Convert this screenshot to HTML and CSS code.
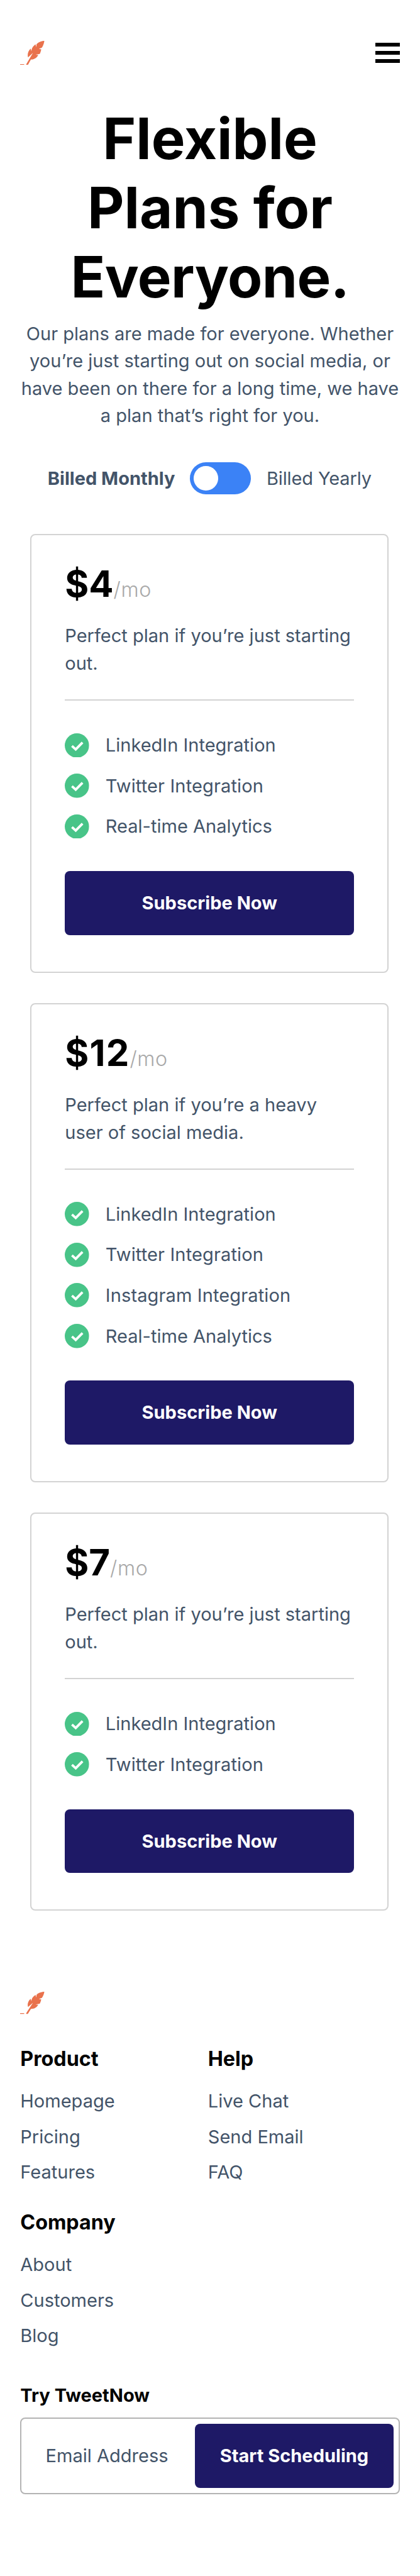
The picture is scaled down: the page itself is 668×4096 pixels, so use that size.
FILE: index.html
```html
<!DOCTYPE html>
<html lang="en">
<head>
<meta charset="utf-8">
<title>TweetNow Pricing</title>
<link rel="stylesheet" href="styles.css">
</head>
<body>
<svg class="sprite" aria-hidden="true">
  <symbol id="feather" viewBox="0 0 72 72" preserveAspectRatio="none">
    <path d="M0 69H12V72H0Z"/>
    <path d="M72 0C62 0 52 5 48.500 10L48 18.500 45.500 10C39 15 33.500 21 33.500 31L31 23C23 31 21 41 23.500 49L38 35.500 17.500 70 19 72H22.500L32 55C41 56 50 50 53.500 42L45.500 41 58 38.500C60.500 34 61.500 29 62.500 25L55.500 23.500 64.500 20C69 13 70.500 6 72 0Z"/>
  </symbol>
  <symbol id="check" viewBox="0 0 24 24">
    <circle cx="12" cy="12" r="12" fill="#48c488"/>
    <path d="M7.100 12.500 10.800 15.900 17.500 9" fill="none" stroke="#fff" stroke-width="2.400"/>
  </symbol>
</svg>

<header class="topbar">
  <svg class="logo"><use href="#feather"/></svg>
  <button class="burger" aria-label="Menu"><span></span><span></span><span></span></button>
</header>

<main>
  <section class="hero">
    <h1>Flexible<br>Plans for<br><span class="tight">Everyone.</span></h1>
    <p>Our plans are made for everyone. Whether<br>you’re just starting out on social media, or<br>have been on there for a long time, we have<br>a plan that’s right for you.</p>
    <div class="billing">
      <span class="active">Billed Monthly</span>
      <span class="toggle"></span>
      <span class="yearly">Billed Yearly</span>
    </div>
  </section>

  <section class="plans">
    <article class="plan">
      <div class="price"><strong>$4</strong><span>/mo</span></div>
      <p>Perfect plan if you’re just starting<br>out.</p>
      <hr>
      <ul>
        <li><svg><use href="#check"/></svg>LinkedIn Integration</li>
        <li class="loose"><svg><use href="#check"/></svg>Twitter Integration</li>
        <li><svg><use href="#check"/></svg>Real-time Analytics</li>
      </ul>
      <button class="btn">Subscribe Now</button>
    </article>
    <article class="plan">
      <div class="price"><strong class="wide">$12</strong><span>/mo</span></div>
      <p>Perfect plan if you’re a heavy<br>user of social media.</p>
      <hr>
      <ul>
        <li><svg><use href="#check"/></svg>LinkedIn Integration</li>
        <li class="loose"><svg><use href="#check"/></svg>Twitter Integration</li>
        <li class="loose"><svg><use href="#check"/></svg>Instagram Integration</li>
        <li><svg><use href="#check"/></svg>Real-time Analytics</li>
      </ul>
      <button class="btn">Subscribe Now</button>
    </article>
    <article class="plan">
      <div class="price"><strong>$7</strong><span>/mo</span></div>
      <p>Perfect plan if you’re just starting<br>out.</p>
      <hr>
      <ul>
        <li><svg><use href="#check"/></svg>LinkedIn Integration</li>
        <li class="loose"><svg><use href="#check"/></svg>Twitter Integration</li>
      </ul>
      <button class="btn">Subscribe Now</button>
    </article>
  </section>
</main>

<footer class="footer">
  <svg class="logo"><use href="#feather"/></svg>
  <div class="links">
    <nav>
      <h2>Product</h2>
      <a>Homepage</a><a>Pricing</a><a>Features</a>
    </nav>
    <nav>
      <h2>Help</h2>
      <a>Live Chat</a><a>Send Email</a><a>FAQ</a>
    </nav>
    <nav>
      <h2>Company</h2>
      <a>About</a><a>Customers</a><a>Blog</a>
    </nav>
  </div>
  <h3>Try TweetNow</h3>
  <form class="signup">
    <span class="field">Email Address</span>
    <button type="button" class="btn">Start Scheduling</button>
  </form>
</footer>
</body>
</html>
```
FILE: styles.css
```css
:root {
  --x: 1.61353px;
  --y: 1.6145px;
}

* {
  box-sizing: border-box;
  margin: 0;
  padding: 0;
}

body {
  background: #fff;
  color: #435469;
  font-family: Inter, "Liberation Sans", sans-serif;
  font-size: calc(18 * var(--x));
  line-height: calc(27 * var(--y));
}

button {
  border: 0;
  background: none;
  font: inherit;
}

.sprite {
  display: none;
}

.logo {
  display: block;
  width: calc(24 * var(--x));
  height: calc(24 * var(--y));
  fill: #e9724c;
}

.topbar {
  display: flex;
  justify-content: space-between;
  align-items: flex-start;
  height: calc(103 * var(--y));
  padding: calc(40 * var(--y)) calc(20 * var(--x)) 0;
}

.burger {
  display: flex;
  flex-direction: column;
  gap: calc(4 * var(--y));
  width: calc(24 * var(--x));
  margin-top: calc(2 * var(--y));
}

.burger span {
  height: calc(4 * var(--y));
  background: #000;
}

.hero {
  text-align: center;
  white-space: nowrap;
}

h1 {
  margin-bottom: calc(8 * var(--y));
  color: #000;
  font-size: calc(56 * var(--x));
  line-height: calc(68 * var(--y));
  font-weight: 700;
}

.tight {
  letter-spacing: -0.006em;
}

.billing {
  display: flex;
  align-items: center;
  height: calc(32 * var(--y));
  margin-top: calc(32 * var(--y));
  padding-left: calc(47 * var(--x));
  gap: calc(14.5 * var(--x));
}

.active {
  font-weight: 700;
}

.yearly {
  margin-left: calc(1.2 * var(--x));
  letter-spacing: -0.005em;
}

.toggle {
  display: flex;
  width: calc(60 * var(--x));
  height: calc(32 * var(--y));
  padding: calc(4 * var(--y)) calc(4 * var(--x));
  border-radius: 99px;
  background: #3b82f6;
}

.toggle::before {
  content: "";
  width: calc(24 * var(--x));
  height: calc(24 * var(--y));
  border-radius: 50%;
  background: #fff;
}

.plans {
  display: flex;
  flex-direction: column;
  gap: calc(30 * var(--y));
  margin-top: calc(39 * var(--y));
  padding: 0 calc(31 * var(--x)) 0 calc(30 * var(--x));
}

.plan {
  padding: calc(27 * var(--y) - 2px) calc(34 * var(--x) - 2px) calc(37 * var(--y) - 2px);
  border: 2px solid #d3d3d3;
  border-radius: calc(5 * var(--x));
  white-space: nowrap;
}

.price {
  display: flex;
  align-items: baseline;
  height: calc(44 * var(--y));
  margin-bottom: calc(15.8 * var(--y));
  line-height: calc(44 * var(--y));
}

.price strong {
  color: #000;
  font-size: calc(36 * var(--x));
}

.price .wide {
  letter-spacing: 0.02em;
}

.price span {
  color: #a9a9a9;
  font-size: calc(20 * var(--x));
  font-weight: 300;
  letter-spacing: 0.02em;
}

.plan hr {
  height: 2px;
  margin: calc(22.2 * var(--y)) 0 calc(33 * var(--y) - 2px);
  border: 0;
  background: #d3d3d3;
}

.plan ul {
  display: flex;
  flex-direction: column;
  gap: calc(16 * var(--y));
  margin-bottom: calc(32 * var(--y));
  list-style: none;
}

.plan li {
  display: flex;
  align-items: center;
  gap: calc(16 * var(--x));
  height: calc(24 * var(--y));
}

.plan li svg {
  width: calc(24 * var(--x));
  height: calc(24 * var(--y));
}

.loose {
  letter-spacing: 0.004em;
}

.btn {
  display: block;
  height: calc(63 * var(--y));
  border-radius: calc(5 * var(--x));
  background: #1e1966;
  color: #fff;
  font-weight: 700;
}

.plan .btn {
  width: 100%;
}

.footer {
  padding: calc(80 * var(--y)) calc(20 * var(--x)) calc(80 * var(--y));
}

.footer .logo {
  height: calc(22 * var(--y));
}

.links {
  display: grid;
  grid-template-columns: calc(185 * var(--x)) 1fr;
  row-gap: calc(21.7 * var(--y));
  margin-top: calc(29.9 * var(--y));
}

.links nav {
  display: flex;
  flex-direction: column;
  gap: calc(8 * var(--y));
}

h2 {
  margin-bottom: calc(6.4 * var(--y));
  color: #000;
  font-size: calc(20 * var(--x));
  line-height: calc(28 * var(--y));
}

h3 {
  margin-top: calc(31.8 * var(--y));
  color: #000;
  font-size: calc(18 * var(--x));
}

.signup {
  display: flex;
  align-items: center;
  justify-content: space-between;
  height: calc(76 * var(--y));
  margin-top: calc(7.8 * var(--y));
  padding: 0 calc(6 * var(--x) - 2px) 0 calc(25 * var(--x) - 2px);
  border: 2px solid #b4b4b4;
  border-radius: calc(5 * var(--x));
}

.signup .btn {
  width: calc(196 * var(--x));
}
```
